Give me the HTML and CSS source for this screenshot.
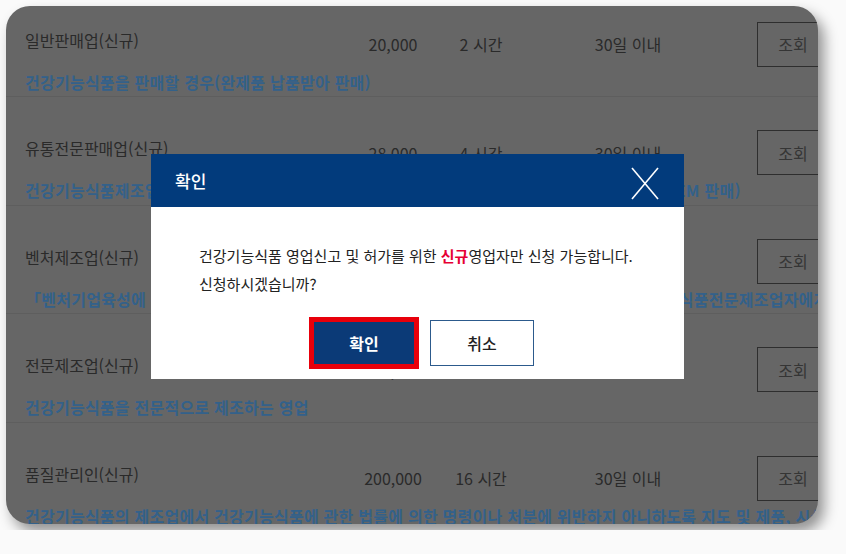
FILE: index.html
```html
<!DOCTYPE html>
<html lang="ko">
<head>
  <meta charset="UTF-8">
  <title>영업 신고 교육</title>
  <link rel="stylesheet" href="styles.css">
</head>
<body>

  <div class="page">
    <div class="card">

      <ul class="biz-list">
        <li class="biz-row">
          <div class="biz-main">
            <span class="biz-name">일반판매업(신규)</span>
            <span class="biz-cell">20,000</span>
            <span class="biz-cell">2 시간</span>
            <span class="biz-cell">30일 이내</span>
            <button class="btn-view">조회</button>
          </div>
          <p class="biz-desc">건강기능식품을 판매할 경우(완제품 납품받아 판매)</p>
        </li>
        <li class="biz-row">
          <div class="biz-main">
            <span class="biz-name">유통전문판매업(신규)</span>
            <span class="biz-cell">28,000</span>
            <span class="biz-cell">4 시간</span>
            <span class="biz-cell">30일 이내</span>
            <button class="btn-view">조회</button>
          </div>
          <p class="biz-desc">건강기능식품제조업자에게 위탁하여 제조한 건강기능식품을 자신의 상표로 유통 · 판매할 경우(OEM 판매)</p>
        </li>
        <li class="biz-row">
          <div class="biz-main">
            <span class="biz-name">벤처제조업(신규)</span>
            <span class="biz-cell">28,000</span>
            <span class="biz-cell">8 시간</span>
            <span class="biz-cell">30일 이내</span>
            <button class="btn-view">조회</button>
          </div>
          <p class="biz-desc">「벤처기업육성에 관한 특별조치법」제2조제1항에 따라 벤처기업으로 확인받은 자로서 건강기능식품전문제조업자에게 위탁하여 제조하는 영업</p>
        </li>
        <li class="biz-row">
          <div class="biz-main">
            <span class="biz-name">전문제조업(신규)</span>
            <span class="biz-cell">200,000</span>
            <span class="biz-cell">16 시간</span>
            <span class="biz-cell">30일 이내</span>
            <button class="btn-view">조회</button>
          </div>
          <p class="biz-desc">건강기능식품을 전문적으로 제조하는 영업</p>
        </li>
        <li class="biz-row">
          <div class="biz-main">
            <span class="biz-name">품질관리인(신규)</span>
            <span class="biz-cell">200,000</span>
            <span class="biz-cell">16 시간</span>
            <span class="biz-cell">30일 이내</span>
            <button class="btn-view">조회</button>
          </div>
          <p class="biz-desc">건강기능식품의 제조업에서 건강기능식품에 관한 법률에 의한 명령이나 처분에 위반하지 아니하도록 지도 및 제품, 시설 등의 관리 업무</p>
        </li>
      </ul>

      <!-- 신청 확인 팝업 -->
      <div class="modal">
        <div class="modal-head">
          <h3>확인</h3>
          <button class="modal-close" aria-label="닫기">
            <svg width="28" height="33" viewBox="0 0 28 33">
              <line x1="1" y1="1" x2="27" y2="32" stroke="#fff" stroke-width="1.6"/>
              <line x1="27" y1="1" x2="1" y2="32" stroke="#fff" stroke-width="1.6"/>
            </svg>
          </button>
        </div>
        <div class="modal-body">
          <p>건강기능식품 영업신고 및 허가를 위한 <strong class="em-red">신규</strong>영업자만 신청 가능합니다.<br>신청하시겠습니까?</p>
          <div class="modal-btns">
            <button class="btn-ok">확인</button>
            <button class="btn-cancel">취소</button>
          </div>
        </div>
      </div>

    </div>
  </div>

</body>
</html>
```

FILE: styles.css
```css
body {
  margin: 0;
  background-color: #fafafa;
  font-family: "Noto Sans CJK KR", "Noto Sans", sans-serif;
}

.page {
  padding: 6px;
}

.card {
  position: relative;
  width: 812px;
  height: 518px;
  background-color: #666666;
  border-radius: 24px;
  overflow: hidden;
  box-shadow: 6px 8px 14px rgba(0,0,0,0.42);
}

.biz-list {
  list-style: none;
  margin: -17.5px 0 0;
  padding: 0;
}

.biz-row {
  padding: 33px 0 3.5px 19px;
  border-bottom: 1px solid #5e5e5e;
}

.biz-main {
  display: grid;
  grid-template-columns: 318px 100px 76px 218px 92px;
  align-items: center;
  height: 45px;
}

.biz-name {
  align-self: start;
  line-height: 37px;
  font-size: 16px;
  color: #2a2a2a;
}

.biz-cell {
  text-align: center;
  font-size: 16px;
  color: #2a2a2a;
}

.btn-view {
  justify-self: end;
  width: 72px;
  height: 45px;
  padding: 0;
  border: 1px solid #2e2e2e;
  background-color: transparent;
  font-family: inherit;
  font-size: 16px;
  color: #353535;
}

.biz-desc {
  margin: 4px 0 0;
  line-height: 22px;
  font-size: 16px;
  font-weight: 700;
  letter-spacing: 0.25px;
  color: #33618a;
  white-space: nowrap;
}

/* popup */
.modal {
  position: absolute;
  left: 145px;
  top: 148px;
  width: 533px;
  background-color: white;
}

.modal-head {
  display: flex;
  align-items: center;
  justify-content: space-between;
  height: 53px;
  padding: 0 25px 0 24px;
  background-color: #023b7c;
}

.modal-head h3 {
  margin: 0;
  font-size: 17px;
  font-weight: 500;
  color: white;
}

.modal-close {
  width: 28px;
  height: 33px;
  margin-top: 5px;
  padding: 0;
  border: none;
  background: none;
}

.modal-close svg {
  display: block;
}

.modal-body {
  padding: 35px 48px 13px;
}

.modal-body p {
  margin: 0;
  font-size: 15px;
  line-height: 28px;
  color: #222;
}

.em-red {
  color: #e60033;
}

.modal-btns {
  display: flex;
  justify-content: center;
  gap: 14px;
  margin-top: 22px;
  padding-left: 11px;
}

.modal-btns button {
  width: 104px;
  height: 46px;
  font-family: inherit;
  font-size: 16px;
}

.btn-ok {
  border: none;
  background-color: #0b3a77;
  color: white;
  font-weight: 700;
  outline: 5px solid #e8000b;
  outline-offset: -2px;
}

.btn-cancel {
  border: 1.5px solid #2c5a8c;
  background-color: white;
  color: #222;
  font-weight: 500;
}
```
